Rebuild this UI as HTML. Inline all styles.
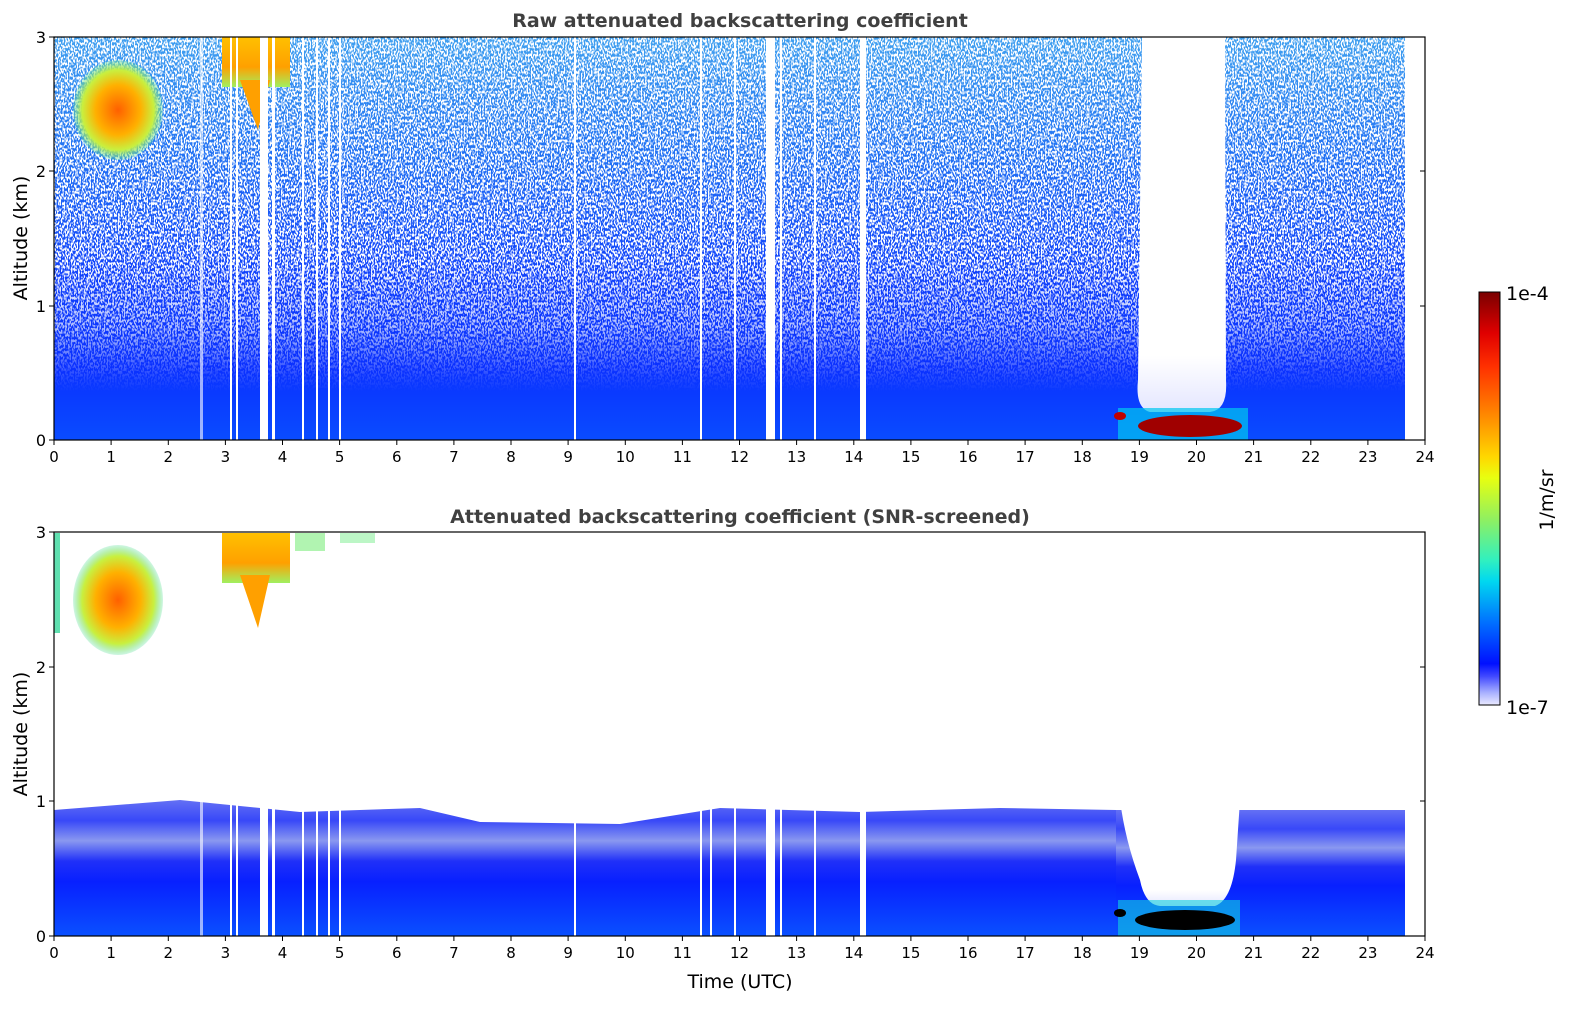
<!DOCTYPE html>
<html><head><meta charset="utf-8"><style>
html,body{margin:0;padding:0;background:#fff;width:1595px;height:1020px;overflow:hidden}
svg{display:block;font-family:"DejaVu Sans","Liberation Sans",sans-serif}
</style></head><body>
<svg width="1595" height="1020" viewBox="0 0 1595 1020" xmlns="http://www.w3.org/2000/svg">
<defs>
<linearGradient id="gtop" x1="0" y1="0" x2="0" y2="1">
<stop offset="0" stop-color="#40a0f0"/>
<stop offset="0.3" stop-color="#2070f4"/>
<stop offset="0.6" stop-color="#1040fc"/>
<stop offset="0.82" stop-color="#0a30ff"/>
<stop offset="1" stop-color="#0a4cff"/>
</linearGradient>
<linearGradient id="mk" x1="0" y1="0" x2="0" y2="1">
<stop offset="0" stop-color="#fff"/>
<stop offset="0.55" stop-color="#fff"/>
<stop offset="0.72" stop-color="#aaa"/>
<stop offset="0.84" stop-color="#222"/>
<stop offset="0.88" stop-color="#000"/>
</linearGradient>
<mask id="m1"><rect x="0" y="37" width="1595" height="403" fill="url(#mk)"/></mask>
<filter id="sp" x="0" y="0" width="100%" height="100%">
<feTurbulence type="fractalNoise" baseFrequency="0.7 0.35" numOctaves="1" seed="4"/>
<feColorMatrix values="0 0 0 0 1  0 0 0 0 1  0 0 0 0 1  0 0 0 9 -4.1"/>
</filter>
<linearGradient id="gbot" x1="0" y1="0" x2="0" y2="1">
<stop offset="0" stop-color="#6470f4"/>
<stop offset="0.15" stop-color="#3848f8"/>
<stop offset="0.3" stop-color="#8a98f0"/>
<stop offset="0.45" stop-color="#2030f8"/>
<stop offset="0.6" stop-color="#0820ff"/>
<stop offset="1" stop-color="#0a50ff"/>
</linearGradient>
<linearGradient id="gcb" x1="0" y1="0" x2="0" y2="1">
<stop offset="0" stop-color="#7a0000"/>
<stop offset="0.1" stop-color="#e00000"/>
<stop offset="0.18" stop-color="#ff3000"/>
<stop offset="0.3" stop-color="#ff8a00"/>
<stop offset="0.4" stop-color="#ffd800"/>
<stop offset="0.45" stop-color="#e8ff10"/>
<stop offset="0.55" stop-color="#90f060"/>
<stop offset="0.65" stop-color="#30f0c0"/>
<stop offset="0.7" stop-color="#00d8f0"/>
<stop offset="0.8" stop-color="#0070ff"/>
<stop offset="0.9" stop-color="#0010ff"/>
<stop offset="0.93" stop-color="#4048ff"/>
<stop offset="0.97" stop-color="#a8b0ff"/>
<stop offset="1" stop-color="#eaeaff"/>
</linearGradient>
<radialGradient id="cloud" cx="0.5" cy="0.5" r="0.5">
<stop offset="0" stop-color="#ff6000"/>
<stop offset="0.5" stop-color="#ffb000"/>
<stop offset="0.8" stop-color="#c8f040"/>
<stop offset="1" stop-color="#60e0a0" stop-opacity="0.3"/>
</radialGradient>
<linearGradient id="cl2" x1="0" y1="0" x2="0" y2="1">
<stop offset="0" stop-color="#ffc000"/>
<stop offset="0.6" stop-color="#ffa000"/>
<stop offset="1" stop-color="#a0f060"/>
</linearGradient>
<linearGradient id="hole" x1="0" y1="0" x2="0" y2="1">
<stop offset="0" stop-color="#fff"/><stop offset="0.85" stop-color="#fff"/><stop offset="1" stop-color="#e4e6ff"/>
</linearGradient>
</defs>

<!-- TOP PLOT -->
<rect x="54" y="37" width="1351" height="403" fill="url(#gtop)"/>
<g mask="url(#m1)"><rect x="54" y="37" width="1351" height="403" filter="url(#sp)"/></g>
<ellipse cx="118" cy="110" rx="45" ry="50" fill="url(#cloud)"/>
<rect x="222" y="37" width="68" height="50" fill="url(#cl2)"/>
<path d="M240 80 L270 80 L258 130 Z" fill="#ffa000"/>
<path d="M1142 37 L1225 37 L1226 380 Q1228 410 1210 412 L1150 412 Q1135 408 1138 380 Z" fill="url(#hole)"/>
<rect x="1118" y="408" width="130" height="32" fill="#00c8f0" opacity="0.7"/>
<ellipse cx="1190" cy="426" rx="52" ry="11" fill="#a00000"/>
<ellipse cx="1120" cy="416" rx="6" ry="4" fill="#c00000"/>
<g fill="#fff">
<rect x="200" y="37" width="3" height="403" opacity="0.6"/>
<rect x="260" y="37" width="8" height="403"/>
<rect x="272" y="37" width="3" height="403"/>
<rect x="230" y="37" width="2" height="403"/>
<rect x="236" y="37" width="2" height="403"/>
<rect x="302" y="37" width="2" height="403"/>
<rect x="316" y="37" width="2" height="403"/>
<rect x="328" y="37" width="2" height="403"/>
<rect x="339" y="37" width="2" height="403"/>
<rect x="574" y="37" width="2" height="403"/>
<rect x="700" y="37" width="2" height="403"/>
<rect x="734" y="37" width="2" height="403"/>
<rect x="766" y="37" width="9" height="403"/>
<rect x="780" y="37" width="2" height="403"/>
<rect x="814" y="37" width="2" height="403"/>
<rect x="860" y="37" width="6" height="403"/>
</g>
<rect x="54" y="37" width="1371" height="403" fill="none" stroke="#000" stroke-width="1.2"/>

<!-- BOTTOM PLOT -->
<path d="M54 810 L180 800 L300 812 L420 808 L480 822 L620 824 L720 808 L860 812 L1000 808 L1116 810 L1116 936 L54 936 Z" fill="url(#gbot)"/>
<path d="M1116 810 L1405 810 L1405 936 L1116 936 Z" fill="url(#gbot)"/>
<path d="M1120 800 Q1125 840 1140 880 Q1145 905 1160 906 L1215 906 Q1232 900 1236 860 L1240 800 Z" fill="url(#hole)"/>
<rect x="1118" y="900" width="122" height="36" fill="#10d0e0" opacity="0.6"/>
<ellipse cx="1185" cy="920" rx="50" ry="10" fill="#000"/>
<ellipse cx="1120" cy="913" rx="6" ry="4" fill="#000"/>
<rect x="54" y="533" width="6" height="100" fill="#60e0b0"/>
<ellipse cx="118" cy="600" rx="45" ry="55" fill="url(#cloud)"/>
<rect x="222" y="533" width="68" height="50" fill="url(#cl2)"/>
<path d="M240 575 L270 575 L258 628 Z" fill="#ffa000"/>
<rect x="295" y="533" width="30" height="18" fill="#90f090" opacity="0.7"/>
<rect x="340" y="533" width="35" height="10" fill="#90f0a0" opacity="0.6"/>
<g fill="#fff">
<rect x="200" y="800" width="3" height="136" opacity="0.6"/>
<rect x="260" y="800" width="8" height="136"/>
<rect x="272" y="800" width="3" height="136"/>
<rect x="230" y="800" width="2" height="136"/>
<rect x="236" y="800" width="2" height="136"/>
<rect x="302" y="800" width="2" height="136"/>
<rect x="316" y="800" width="2" height="136"/>
<rect x="328" y="800" width="2" height="136"/>
<rect x="339" y="800" width="2" height="136"/>
<rect x="574" y="800" width="2" height="136"/>
<rect x="700" y="800" width="2" height="136"/>
<rect x="710" y="800" width="2" height="136"/>
<rect x="734" y="800" width="2" height="136"/>
<rect x="766" y="800" width="9" height="136"/>
<rect x="780" y="800" width="2" height="136"/>
<rect x="814" y="800" width="2" height="136"/>
<rect x="860" y="800" width="6" height="136"/>
</g>
<rect x="54" y="532" width="1371" height="404" fill="none" stroke="#000" stroke-width="1.2"/>

<!-- ticks -->
<path stroke="#000" stroke-width="1" d="M54 440v5M111.1 440v5M168.3 440v5M225.4 440v5M282.5 440v5M339.6 440v5M396.8 440v5M453.9 440v5M511 440v5M568.1 440v5M625.3 440v5M682.4 440v5M739.5 440v5M796.6 440v5M853.8 440v5M910.9 440v5M968 440v5M1025.1 440v5M1082.3 440v5M1139.4 440v5M1196.5 440v5M1253.6 440v5M1310.8 440v5M1367.9 440v5M1425 440v5
M54 936v5M111.1 936v5M168.3 936v5M225.4 936v5M282.5 936v5M339.6 936v5M396.8 936v5M453.9 936v5M511 936v5M568.1 936v5M625.3 936v5M682.4 936v5M739.5 936v5M796.6 936v5M853.8 936v5M910.9 936v5M968 936v5M1025.1 936v5M1082.3 936v5M1139.4 936v5M1196.5 936v5M1253.6 936v5M1310.8 936v5M1367.9 936v5M1425 936v5
M49 440h5M49 306h5M49 171h5M49 37h5M1425 306h-5M1425 171h-5
M49 936h5M49 801h5M49 667h5M49 532h5M1425 801h-5M1425 667h-5"/>

<g font-size="15" fill="#000" text-anchor="middle">
<text x="54" y="462">0</text><text x="111.1" y="462">1</text><text x="168.3" y="462">2</text><text x="225.4" y="462">3</text><text x="282.5" y="462">4</text><text x="339.6" y="462">5</text><text x="396.8" y="462">6</text><text x="453.9" y="462">7</text><text x="511" y="462">8</text><text x="568.1" y="462">9</text><text x="625.3" y="462">10</text><text x="682.4" y="462">11</text><text x="739.5" y="462">12</text><text x="796.6" y="462">13</text><text x="853.8" y="462">14</text><text x="910.9" y="462">15</text><text x="968" y="462">16</text><text x="1025.1" y="462">17</text><text x="1082.3" y="462">18</text><text x="1139.4" y="462">19</text><text x="1196.5" y="462">20</text><text x="1253.6" y="462">21</text><text x="1310.8" y="462">22</text><text x="1367.9" y="462">23</text><text x="1425" y="462">24</text>
<text x="54" y="958">0</text><text x="111.1" y="958">1</text><text x="168.3" y="958">2</text><text x="225.4" y="958">3</text><text x="282.5" y="958">4</text><text x="339.6" y="958">5</text><text x="396.8" y="958">6</text><text x="453.9" y="958">7</text><text x="511" y="958">8</text><text x="568.1" y="958">9</text><text x="625.3" y="958">10</text><text x="682.4" y="958">11</text><text x="739.5" y="958">12</text><text x="796.6" y="958">13</text><text x="853.8" y="958">14</text><text x="910.9" y="958">15</text><text x="968" y="958">16</text><text x="1025.1" y="958">17</text><text x="1082.3" y="958">18</text><text x="1139.4" y="958">19</text><text x="1196.5" y="958">20</text><text x="1253.6" y="958">21</text><text x="1310.8" y="958">22</text><text x="1367.9" y="958">23</text><text x="1425" y="958">24</text>
</g>
<g font-size="16" fill="#000" text-anchor="end">
<text x="46" y="446">0</text><text x="46" y="312">1</text><text x="46" y="177">2</text><text x="46" y="43">3</text>
<text x="46" y="942">0</text><text x="46" y="807">1</text><text x="46" y="673">2</text><text x="46" y="538">3</text>
</g>
<text transform="translate(27 238) rotate(-90)" font-size="19" text-anchor="middle">Altitude (km)</text>
<text transform="translate(27 734) rotate(-90)" font-size="19" text-anchor="middle">Altitude (km)</text>
<text x="740" y="988" font-size="19" text-anchor="middle">Time (UTC)</text>
<text x="740" y="27" font-size="19" font-weight="bold" fill="#404040" text-anchor="middle">Raw attenuated backscattering coefficient</text>
<text x="740" y="523" font-size="19" font-weight="bold" fill="#404040" text-anchor="middle">Attenuated backscattering coefficient (SNR-screened)</text>

<!-- colorbar -->
<rect x="1479" y="292" width="21" height="413" fill="url(#gcb)" stroke="#000" stroke-width="1"/>
<text x="1506" y="300" font-size="19">1e-4</text>
<text x="1506" y="714" font-size="19">1e-7</text>
<text transform="translate(1553 500) rotate(-90)" font-size="19" text-anchor="middle">1/m/sr</text>
</svg>
</body></html>
